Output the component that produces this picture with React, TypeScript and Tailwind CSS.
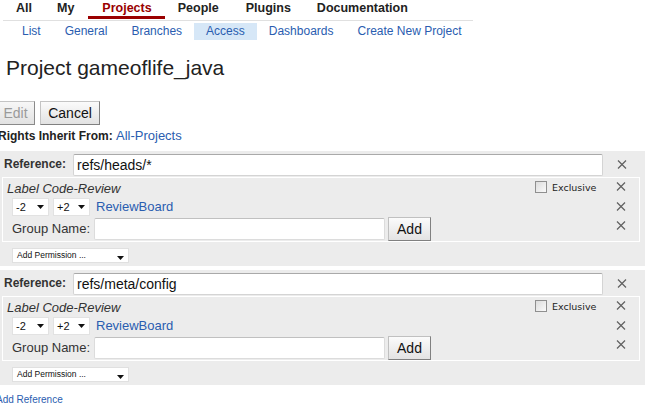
import React from "react";

const XIcon = ({ className = "" }: { className?: string }) => (
  <svg width="10" height="9" viewBox="0 0 10 9" className={className}>
    <path d="M1 0.5L9 8.5M9 0.5L1 8.5" stroke="#606060" strokeWidth="1.2" fill="none" />
  </svg>
);

const Arrow = () => (
  <svg width="7" height="4" viewBox="0 0 7 4">
    <path d="M0 0H7L3.5 4Z" fill="#111" />
  </svg>
);

const MiniSelect = ({ value }: { value: string }) => (
  <div className="flex h-[18px] w-[37px] items-center justify-between border border-[#e2e2e2] bg-white pl-[3px] pr-[4px] text-[11px] text-[#111]">
    <span>{value}</span>
    <Arrow />
  </div>
);

const Section = ({ refName }: { refName: string }) => (
  <div className="w-[645px] bg-[#ececec]">
    {/* Reference row */}
    <div className="flex h-[26px] items-start">
      <span className="mt-[5px] w-[73px] pl-[4px] text-[12px] font-bold leading-[16px] text-[#333]">Reference:</span>
      <div className="mt-[3px] flex h-[22px] w-[530px] items-center rounded-[2px] border border-[#d4d4d4] border-t-[#a9a9a9] bg-white pl-[3px] text-[14px] text-[#111]">
        {refName}
      </div>
      <XIcon className="ml-[14px] mt-[9px]" />
    </div>
    {/* Permission box */}
    <div className="ml-[2px] w-[638px] border border-white">
      <div className="flex h-[20px] items-start">
        <span className="pl-[4px] pt-[3px] text-[13px] italic leading-[16px] text-[#333]">Label Code-Review</span>
        <div className="flex-1" />
        <div className="mr-[13px] flex w-[91px] items-start">
          <div className="mt-[3px] h-[12px] w-[12px] border border-[#8f8f8f] bg-gradient-to-br from-[#dcdcdc] to-[#fafafa]" />
          <span className="ml-[5px] mt-[4px] text-[9.5px] leading-[12px] text-[#222] [font-family:'DejaVu_Sans',sans-serif]">Exclusive</span>
          <div className="flex-1" />
          <XIcon className="mt-[4px]" />
        </div>
      </div>
      <div className="flex h-[19px] items-start">
        <div className="ml-[9px] flex gap-[4px]">
          <MiniSelect value="-2" />
          <MiniSelect value="+2" />
        </div>
        <span className="ml-[6px] text-[13px] leading-[18px] text-[#2a5db0]">ReviewBoard</span>
        <div className="flex-1" />
        <XIcon className="mr-[13px] mt-[4px]" />
      </div>
      <div className="flex h-[24px] items-start">
        <span className="mt-[4px] w-[91px] pl-[9px] text-[13px] leading-[16px] text-[#333]">Group Name:</span>
        <div className="mt-[1px] h-[22px] w-[291px] rounded-[2px] border border-[#dcdcdc] border-t-[#c0c0c0] bg-white" />
        <div className="ml-[3px] flex h-[24px] w-[43px] items-center justify-center border border-[#c0c0c0] border-b-[#808080] border-r-[#808080] bg-gradient-to-b from-[#fbfbfb] to-[#e3e3e3] text-[14px] text-[#111]">
          Add
        </div>
        <div className="flex-1" />
        <XIcon className="mr-[13px] mt-[4px]" />
      </div>
    </div>
    <div className="pb-[3px] pt-[6px]">
      <div className="ml-[12px] flex h-[15px] w-[117px] items-center justify-between border border-[#e0e0e0] bg-white pl-[4px] pr-[4px] text-[8.5px] text-[#111]">
        <span>Add Permission ...</span>
        <span className="mt-[5px]"><Arrow /></span>
      </div>
    </div>
  </div>
);

export default function App() {
  return (
    <div className="h-[416px] w-[672px] overflow-hidden bg-white [font-family:'Liberation_Sans',Arial,sans-serif]">
      {/* Top nav */}
      <div className="ml-[3px] flex h-[21px] w-[470px] items-start border-b border-[#e0e0e0] text-[12.5px] font-bold leading-[16px] text-[#222]">
        <span className="ml-[13px]">All</span>
        <span className="ml-[25px]">My</span>
        <span className="ml-[14px] box-border h-[19px] border-b-[3px] border-[#9a0000] pl-[14px] pr-[13px] text-[#9a0000]">Projects</span>
        <span className="ml-[13px]">People</span>
        <span className="ml-[27px]">Plugins</span>
        <span className="ml-[26px]">Documentation</span>
      </div>
      {/* Sub nav */}
      <div className="ml-[10px] mt-[2px] flex h-[17px] text-[12px] leading-[17px] text-[#2a5db0]">
        <span className="px-[12px]">List</span>
        <span className="px-[12px]">General</span>
        <span className="px-[12px]">Branches</span>
        <span className="bg-[#d6e7f7] px-[12px]">Access</span>
        <span className="px-[12px]">Dashboards</span>
        <span className="px-[12px]">Create New Project</span>
      </div>
      {/* Title */}
      <div className="ml-[6px] mt-[16px] text-[21px] leading-[24px] text-[#222]">Project gameoflife_java</div>
      {/* Buttons */}
      <div className="ml-[-4px] mt-[21px] flex">
        <div className="flex h-[24px] w-[39px] items-center justify-center border border-[#c4c4c4] border-b-[#8a8a8a] border-r-[#8a8a8a] bg-gradient-to-b from-[#f7f7f7] to-[#e2e2e2] text-[14px] text-[#9a9a9a]">
          Edit
        </div>
        <div className="ml-[5px] flex h-[24px] w-[60px] items-center justify-center border border-[#c4c4c4] border-b-[#808080] border-r-[#808080] bg-gradient-to-b from-[#fbfbfb] to-[#e2e2e2] text-[14px] text-[#111]">
          Cancel
        </div>
      </div>
      <div className="ml-[-2px] mt-[2px] h-[16px] leading-[16px]">
        <span className="text-[12px] font-bold text-[#222]">Rights Inherit From: </span>
        <span className="text-[13px] text-[#2a5db0]">All-Projects</span>
      </div>
      <div className="mt-[8px]">
        <Section refName="refs/heads/*" />
      </div>
      <div className="mt-[4px]">
        <Section refName="refs/meta/config" />
      </div>
      <div className="ml-[-4px] mt-[9px] text-[10px] leading-[12px] text-[#2a5db0]">Add Reference</div>
    </div>
  );
}
